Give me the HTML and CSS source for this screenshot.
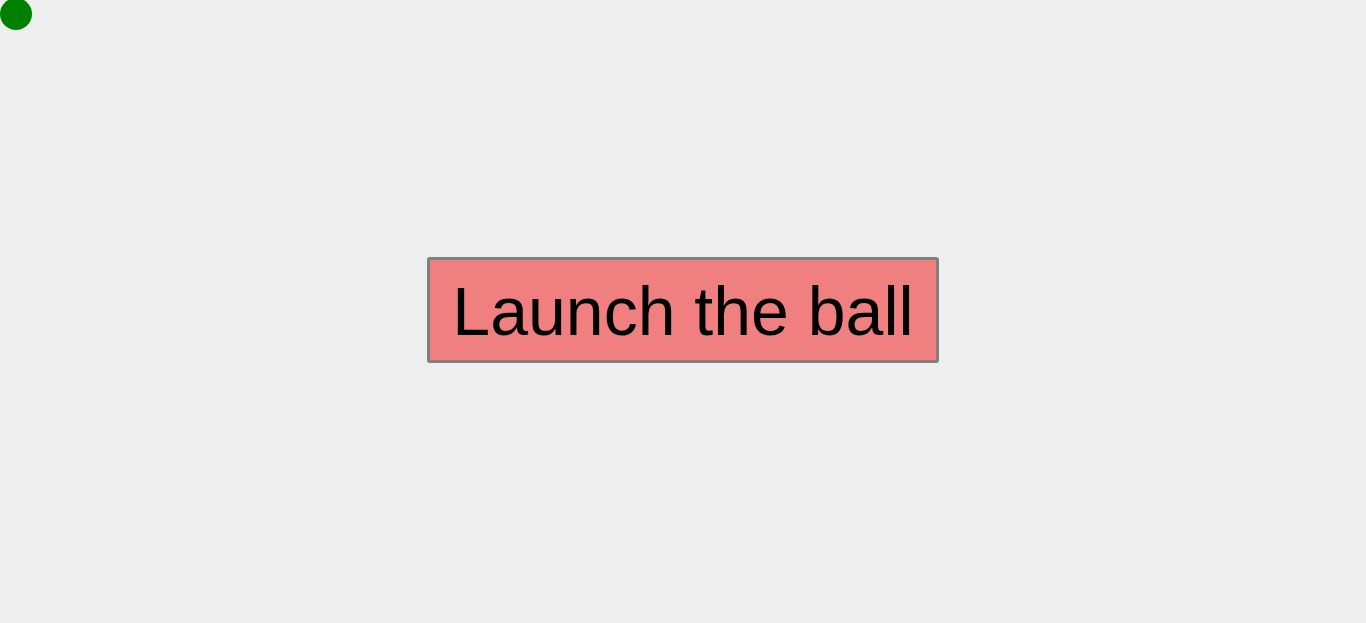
FILE: index.html
```html
<!DOCTYPE html>
<html>
<head>
<meta charset="utf-8">
<link rel="stylesheet" href="styles.css">
</head>
<body>
<div class="ball"></div>
<main class="stage">
  <button class="launch">Launch the ball</button>
</main>
</body>
</html>
```
FILE: styles.css
```css
html, body {
  margin: 0;
  padding: 0;
  height: 100%;
}
body {
  background: #eeeeee;
  font-family: "Liberation Sans", Arial, sans-serif;
  overflow: hidden;
}
.ball {
  position: absolute;
  left: 0;
  top: -2px;
  width: 32px;
  height: 32px;
  border-radius: 50%;
  background: #008000;
}
.stage {
  height: 100%;
  display: flex;
  align-items: center;
  justify-content: center;
}
.launch {
  font-family: "Liberation Sans", Arial, sans-serif;
  font-size: 68px;
  line-height: 78px;
  color: #000;
  background: #f08080;
  border: 3px solid #808080;
  border-radius: 3px;
  padding: 12px 22px 10px;
  margin: 0 0 4px 0;
}
```
